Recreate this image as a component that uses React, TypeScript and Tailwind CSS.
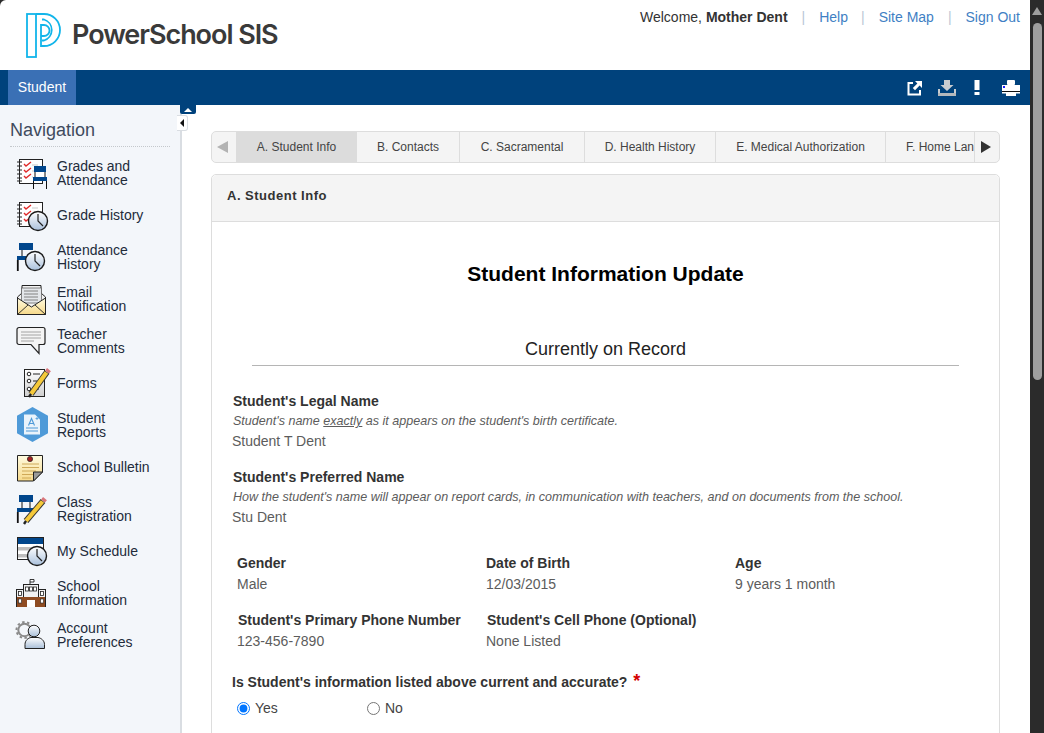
import React from "react";

const Clock = ({ cx, cy, r = 9.5 }: { cx: number; cy: number; r?: number }) => (
  <g>
    <circle cx={cx} cy={cy} r={r} fill="url(#clk)" stroke="#1a1a1a" strokeWidth="1.4" />
    <path d={`M${cx} ${cy - r + 2.5}V${cy}L${cx + 5} ${cy + 5}`} fill="none" stroke="#222" strokeWidth="1.2" />
  </g>
);

const Notebook = ({ y = 3 }: { y?: number }) => (
  <g>
    <rect x="5.5" y={y + 0.5} width="23" height="24" fill="#fff" stroke="#222" />
    {[3, 7, 11, 15, 19, 22].map((d) => (
      <path key={d} d={`M3 ${y + d}h5`} stroke="#222" strokeWidth="1" />
    ))}
    {[3, 9, 15].map((d) => (
      <path key={d} d={`M10 ${y + d + 2}l2 2 5-4`} fill="none" stroke="#e02b2b" strokeWidth="1.4" />
    ))}
    {[6, 12, 18].map((d) => (
      <path key={d} d={`M18 ${y + d}h6`} stroke="#bbb" strokeWidth="0.8" />
    ))}
  </g>
);

const Pencil = ({ x1, y1, x2, y2 }: { x1: number; y1: number; x2: number; y2: number }) => (
  <g>
    <path d={`M${x1} ${y1}L${x2} ${y2}`} stroke="#333" strokeWidth="6" />
    <path d={`M${x1 - 0.5} ${y1 + 0.5}L${x2} ${y2}`} stroke="#f5c93a" strokeWidth="4.2" />
    <path d={`M${x1} ${y1}l2 -2.4`} stroke="#d9757a" strokeWidth="5" />
    <path d={`M${x2} ${y2}l-2 3`} stroke="#222" strokeWidth="2.4" />
  </g>
);

const Svg = ({ children }: { children: React.ReactNode }) => (
  <svg width="34" height="34" viewBox="0 0 34 34" className="overflow-visible shrink-0">
    <defs>
      <linearGradient id="clk" x1="0" y1="0" x2="0" y2="1">
        <stop offset="0" stopColor="#ffffff" />
        <stop offset="1" stopColor="#a9c0dc" />
      </linearGradient>
      <linearGradient id="ppl" x1="0" y1="0" x2="0" y2="1">
        <stop offset="0" stopColor="#ffffff" />
        <stop offset="1" stopColor="#a9bfd8" />
      </linearGradient>
      <linearGradient id="yel" x1="0" y1="0" x2="0" y2="1">
        <stop offset="0" stopColor="#fffbe0" />
        <stop offset="1" stopColor="#f6d98a" />
      </linearGradient>
      <linearGradient id="gry" x1="0" y1="0" x2="0" y2="1">
        <stop offset="0" stopColor="#ffffff" />
        <stop offset="1" stopColor="#cfcfcf" />
      </linearGradient>
    </defs>
    {children}
  </svg>
);

const icons: Record<string, React.ReactNode> = {
  grades: (
    <Svg>
      <Notebook />
      <rect x="20" y="10" width="12" height="6" fill="#00468c" />
      <rect x="19" y="21" width="14" height="4" fill="#00468c" />
      <rect x="19" y="16" width="14" height="5" fill="#fff" />
      <path d="M21 16v5M31 16v5M19.5 25v8M32.5 25v8" stroke="#111" strokeWidth="1" />
    </Svg>
  ),
  history: (
    <Svg>
      <Notebook y={4} />
      <Clock cx={24} cy={23} />
    </Svg>
  ),
  attendance: (
    <Svg>
      <rect x="5" y="3" width="14" height="7" fill="#00468c" />
      <rect x="3" y="16" width="10" height="4" fill="#00468c" />
      <path d="M3.8 20v11" stroke="#111" strokeWidth="1.8" />
      <path d="M8 10v6" stroke="#111" strokeWidth="1" />
      <Clock cx={21} cy={21} />
    </Svg>
  ),
  email: (
    <Svg>
      <path d="M3.5 15L8 11V3.5h19V11l4.5 4V32.5h-28z" fill="#f2f2f2" stroke="#222" />
      <rect x="7.5" y="6" width="20" height="15" fill="#e3e6ea" stroke="#555" strokeWidth="0.7" />
      <path d="M10 9h14M10 12h14M10 15h14M10 18h14" stroke="#777" strokeWidth="0.9" />
      <path d="M3.5 16L17.5 25 31.5 16V32.5h-28z" fill="url(#yel)" stroke="#222" />
      <path d="M3.5 32.5L14 23M31.5 32.5L21 23" stroke="#222" strokeWidth="0.9" />
    </Svg>
  ),
  comment: (
    <Svg>
      <path d="M5 3.5h24a2 2 0 0 1 2 2v13a2 2 0 0 1-2 2h-4v9l-8-9H5a2 2 0 0 1-2-2v-13a2 2 0 0 1 2-2z" fill="#f4f4f4" stroke="#222" strokeWidth="1.2" />
      <path d="M7 8h20M7 11h20M7 14h20M7 17h13" stroke="#9a9a9a" strokeWidth="0.9" />
    </Svg>
  ),
  forms: (
    <Svg>
      <rect x="10.5" y="3.5" width="20" height="27" fill="url(#gry)" stroke="#222" />
      <circle cx="15" cy="8" r="1.8" fill="#fff" stroke="#222" />
      <circle cx="15" cy="15" r="1.8" fill="#fff" stroke="#222" />
      <circle cx="15" cy="23" r="1.8" fill="#fff" stroke="#222" />
      <path d="M19 8h7M19 15h4M19 23h6" stroke="#222" strokeWidth="1" />
      <Pencil x1={33} y1={6} x2={17} y2={28} />
    </Svg>
  ),
  reports: (
    <Svg>
      <path d="M18.5 -1L34 7.7V25.3L18.5 34 3 25.3V7.7z" fill="#4e9ad8" />
      <path d="M10 6.5h11l5 5V26.5H10z" fill="#e9f3fb" />
      <path d="M14.5 17.5l3-7 3 7M15.5 15.5h4" fill="none" stroke="#4e9ad8" strokeWidth="1.1" />
      <path d="M23 9v3M21.5 10.5h3" stroke="#4e9ad8" strokeWidth="0.8" />
      <path d="M12 20h12M12 23h12" stroke="#4e9ad8" strokeWidth="1.1" />
    </Svg>
  ),
  bulletin: (
    <Svg>
      <path d="M3.5 5.5h25V22l-9 9H3.5z" fill="url(#yel)" stroke="#222" />
      <path d="M8 14h17M8 17.5h17M8 21h14M8 24.5h11M8 28h9" stroke="#c9a24e" strokeWidth="0.9" />
      <path d="M19.5 31V22h9z" fill="#9a9a9a" stroke="#222" />
      <circle cx="16" cy="9" r="2.6" fill="#a52020" stroke="#222" strokeWidth="0.7" />
    </Svg>
  ),
  classreg: (
    <Svg>
      <rect x="5" y="3" width="14" height="7" fill="#00468c" />
      <rect x="3" y="16" width="16" height="4" fill="#00468c" />
      <path d="M8 10v6M16 10v6" stroke="#111" strokeWidth="1" />
      <path d="M3.8 20v11" stroke="#111" strokeWidth="1.8" />
      <Pencil x1={29} y1={9} x2={12} y2={29} />
    </Svg>
  ),
  schedule: (
    <Svg>
      <rect x="3.5" y="3.5" width="26" height="22" fill="#fff" stroke="#222" />
      <rect x="4" y="4" width="25" height="6" fill="#00468c" />
      <rect x="4" y="13" width="25" height="3.5" fill="#bdbdbd" />
      <rect x="4" y="20" width="25" height="3.5" fill="#bdbdbd" />
      <Clock cx={23} cy={22} />
    </Svg>
  ),
  school: (
    <Svg>
      <path d="M16 8V3.5h4V6h-4" fill="#fff" stroke="#222" strokeWidth="0.9" />
      <rect x="9.5" y="8.5" width="15" height="22" fill="#f1f1f1" stroke="#222" />
      <rect x="2.5" y="13.5" width="7" height="17" fill="#f1f1f1" stroke="#222" />
      <rect x="24.5" y="13.5" width="7" height="17" fill="#f1f1f1" stroke="#222" />
      <rect x="3" y="21" width="28" height="10" fill="#8f4c22" />
      <rect x="13" y="24" width="8" height="7" fill="#fff" />
      <rect x="4.5" y="23" width="3" height="4" fill="#fff" stroke="#222" strokeWidth="0.6" />
      <rect x="26.5" y="23" width="3" height="4" fill="#fff" stroke="#222" strokeWidth="0.6" />
      {[11.5, 15.5, 19.5].map((x) => (
        <rect key={x} x={x} y="11" width="3" height="4" fill="#fff" stroke="#222" strokeWidth="0.8" />
      ))}
      <rect x="4.5" y="15.5" width="3" height="4" fill="#fff" stroke="#222" strokeWidth="0.8" />
      <rect x="26.5" y="15.5" width="3" height="4" fill="#fff" stroke="#222" strokeWidth="0.8" />
    </Svg>
  ),
  account: (
    <Svg>
      <circle cx="10.5" cy="12" r="6.2" fill="none" stroke="#8a8a8a" strokeWidth="2" />
      <circle cx="10.5" cy="12" r="8" fill="none" stroke="#8a8a8a" strokeWidth="2" strokeDasharray="2.5 2.5" />
      <path d="M9.5 30.5v-4c0-4 3-6.5 6-7h7c3 .5 6.5 3 6.5 7v4z" transform="translate(1.5 0)" fill="url(#ppl)" stroke="#222" />
      <circle cx="20" cy="13" r="5.8" fill="url(#ppl)" stroke="#222" />
    </Svg>
  ),
};

const navItems: [string, string[]][] = [
  ["grades", ["Grades and", "Attendance"]],
  ["history", ["Grade History"]],
  ["attendance", ["Attendance", "History"]],
  ["email", ["Email", "Notification"]],
  ["comment", ["Teacher", "Comments"]],
  ["forms", ["Forms"]],
  ["reports", ["Student", "Reports"]],
  ["bulletin", ["School Bulletin"]],
  ["classreg", ["Class", "Registration"]],
  ["schedule", ["My Schedule"]],
  ["school", ["School", "Information"]],
  ["account", ["Account", "Preferences"]],
];

const tabs: [string, string][] = [
  ["A. Student Info", "w-[121px] bg-[#dcdcdc]"],
  ["B. Contacts", "w-[103px] border-r border-[#dddddd]"],
  ["C. Sacramental", "w-[125px] border-r border-[#dddddd]"],
  ["D. Health History", "w-[131px] border-r border-[#dddddd]"],
  ["E. Medical Authorization", "w-[170px] border-r border-[#dddddd]"],
];

const Sep = () => <span className="text-[#b9c6d6] mx-[14px]">|</span>;

const Field = ({ label, value, w, shift }: { label: string; value: string; w: string; shift?: boolean }) => (
  <div className={w}>
    <div className="font-bold text-[#333] text-[14px] leading-[16px]">{label}</div>
    <div className={`text-[#5c5c5c] text-[14px] leading-[16px] mt-[5px] ${shift ? "-ml-px" : ""}`}>{value}</div>
  </div>
);

export default function App() {
  return (
    <div
      className="relative w-[1044px] h-[733px] overflow-hidden flex bg-[#2b2b2b]"
      style={{ fontFamily: '"Liberation Sans", Arial, sans-serif' }}
    >
      <div className="w-[1030px] h-[733px] flex flex-col bg-white rounded-tl-[6px] overflow-hidden">
        <header className="h-[70px] shrink-0 flex justify-between">
          <div className="flex items-start pl-[26px] pt-[13px]">
            <svg width="36" height="46" viewBox="0 0 36 46" className="shrink-0">
              <g fill="none" stroke="#12b5ea" strokeWidth="1.8">
                <rect x="1" y="1" width="9" height="43" />
                <path d="M10 1h8a16 16 0 0 1 0 32h-3V12h3a5.5 5.5 0 0 1 0 11h-3" />
                <path d="M16 6.500h2a11 11 0 0 1 0 21h-2" />
              </g>
            </svg>
            <span
              className="ml-[10px] mt-[6px] text-[27px] leading-[32px] font-semibold text-[#3a3a3a] tracking-[-1.05px] whitespace-nowrap"
              style={{ fontFamily: 'Inter, "Liberation Sans", sans-serif' }}
            >
              PowerSchool SIS
            </span>
          </div>
          <div className="pr-[10px] pt-[9px] text-[14px] leading-[16px] whitespace-nowrap">
            <span className="text-[#333]">
              Welcome, <b>Mother Dent</b>
            </span>
            <Sep />
            <span className="text-[#3f7fc4] -mr-px">Help</span>
            <Sep />
            <span className="text-[#3f7fc4]">Site Map</span>
            <Sep />
            <span className="text-[#3f7fc4]">Sign Out</span>
          </div>
        </header>

        <div className="h-[35px] shrink-0 bg-[#00427c] flex justify-between pl-[8px] pr-[10px]">
          <div className="w-[68px] h-full bg-[#3a70b5] text-white text-[14px] flex items-center justify-center">Student</div>
          <div className="flex items-center">
            <svg width="16" height="16" viewBox="0 0 16 16" className="mr-[15px]">
              <path d="M6 3H1.500v11.500H13V10" fill="none" stroke="#fff" strokeWidth="2" />
              <path d="M8 1h7v7l-2.400-2.400L8 10.200 5.800 8l4.600-4.600z" fill="#fff" />
            </svg>
            <svg width="18" height="16" viewBox="0 0 18 16" className="mr-[18px]">
              <path d="M6 0h6v5h3.500L9 11 2.500 5H6z" fill="#c8ccd0" />
              <path d="M1 9v6h16V9" fill="none" stroke="#c8ccd0" strokeWidth="2" />
              <rect x="0" y="13" width="18" height="3" fill="#b4b8bc" />
            </svg>
            <svg width="6" height="15" viewBox="0 0 6 15" className="mr-[22px]">
              <rect x="0.5" y="0" width="5" height="10" fill="#fff" />
              <rect x="0.5" y="12" width="5" height="3" fill="#fff" />
            </svg>
            <svg width="18" height="16" viewBox="0 0 18 16">
              <rect x="5" y="0" width="8" height="5" rx="1" fill="#fff" />
              <rect x="0" y="5" width="18" height="6" fill="#fff" />
              <rect x="1" y="6" width="2" height="2" fill="#1a1aff" />
              <rect x="0" y="11" width="18" height="1" fill="#111" />
              <rect x="0" y="12" width="18" height="1.5" fill="#fff" />
              <rect x="4" y="13" width="10" height="3" fill="#fff" />
            </svg>
          </div>
        </div>

        <div className="flex-1 flex min-h-0">
          <aside className="relative w-[182px] shrink-0 bg-[#f3f6fa] border-r-[2px] border-[#d9dde2]">
            <div className="mx-[10px] h-[42px] border-b border-dotted border-[#c4c8cc] text-[18px] leading-[20px] pt-[15px] text-[#3f4b5e]">
              Navigation
            </div>
            <div className="mt-[5px]">
              {navItems.map(([key, lines]) => (
                <div key={key} className="h-[42px] flex items-center pl-[14px]">
                  {icons[key]}
                  <div className="ml-[9px] text-[14px] leading-[14px] text-[#222b3a] whitespace-nowrap">
                    {lines.map((l) => (
                      <div key={l}>{l}</div>
                    ))}
                  </div>
                </div>
              ))}
            </div>
            <div className="absolute left-[180px] top-0 w-[16px] h-[9px] bg-[#00427c] rounded-b-[2px] flex items-center justify-center">
              <svg width="8" height="4" viewBox="0 0 8 4">
                <path d="M4 0l4 4H0z" fill="#fff" />
              </svg>
            </div>
            <div className="absolute left-[177px] top-[10px] w-[11px] h-[16px] bg-white border border-[#d9dde2] border-l-0 rounded-r-[3px] flex items-center justify-center">
              <svg width="4" height="8" viewBox="0 0 4 8">
                <path d="M4 0v8L0 4z" fill="#111" />
              </svg>
            </div>
          </aside>

          <main className="flex-1 min-w-0 pl-[29px] pr-[30px] pt-[26px] overflow-hidden">
            <div className="h-[32px] flex border border-[#dddddd] rounded-[5px] bg-[#f4f4f4] overflow-hidden text-[12px] text-[#444]">
              <div className="w-[24px] shrink-0 flex items-center justify-center pr-[3px]">
                <svg width="11" height="12" viewBox="0 0 11 12">
                  <path d="M11 0v12L0 6z" fill="#b3b3b3" />
                </svg>
              </div>
              {tabs.map(([label, cls]) => (
                <div key={label} className={`${cls} shrink-0 flex items-center justify-center whitespace-nowrap`}>
                  {label}
                </div>
              ))}
              <div className="flex-1 min-w-0 overflow-hidden flex items-center pl-[20px] whitespace-nowrap">F. Home Lan</div>
              <div className="w-[25px] shrink-0 border-l border-[#dddddd] flex items-center justify-center pr-[2px]">
                <svg width="10" height="12" viewBox="0 0 10 12">
                  <path d="M0 0v12l10-6z" fill="#333" />
                </svg>
              </div>
            </div>

            <section className="mt-[11px] border border-[#dddddd] rounded-t-[5px] h-[700px]">
              <div className="h-[47px] bg-[#f4f4f4] border-b border-[#dddddd] flex items-center pl-[15px] pb-[4px] font-bold text-[13px] text-[#333] tracking-[0.5px] rounded-t-[5px]">
                A. Student Info
              </div>
              <div className="pl-[21px] pr-[21px]">
                <h1 className="mt-[40px] text-center text-[21px] leading-[24px] font-bold text-black">Student Information Update</h1>
                <h2 className="mt-[52px] mx-[19px] h-[28px] border-b border-[#b5b5b5] text-center text-[18px] leading-[22px] text-[#222]">
                  Currently on Record
                </h2>

                <div className="mt-[27px] text-[14px] leading-[16px] font-bold text-[#333]">Student's Legal Name</div>
                <div className="mt-[4px] text-[12.55px] leading-[16px] italic text-[#5c5c5c]">
                  Student's name <u>exactly</u> as it appears on the student's birth certificate.
                </div>
                <div className="mt-[4px] -ml-px text-[14px] leading-[16px] text-[#5c5c5c]">Student T Dent</div>

                <div className="mt-[20px] text-[14px] leading-[16px] font-bold text-[#333]">Student's Preferred Name</div>
                <div className="mt-[4px] text-[12.55px] leading-[16px] italic text-[#5c5c5c]">
                  How the student's name will appear on report cards, in communication with teachers, and on documents from the school.
                </div>
                <div className="mt-[4px] -ml-px text-[14px] leading-[16px] text-[#5c5c5c]">Stu Dent</div>

                <div className="mt-[30px] pl-[4px] flex">
                  <Field w="w-[249px]" label="Gender" value="Male" />
                  <Field w="w-[249px]" label="Date of Birth" value="12/03/2015" />
                  <Field w="w-[200px]" label="Age" value="9 years 1 month" />
                </div>
                <div className="mt-[20px] pl-[5px] flex">
                  <Field w="w-[249px]" label="Student's Primary Phone Number" value="123-456-7890" shift />
                  <Field w="w-[300px]" label="Student's Cell Phone (Optional)" value="None Listed" shift />
                </div>

                <div className="mt-[24px] -ml-px text-[14px] leading-[16px] font-bold text-[#333]">
                  Is Student's information listed above current and accurate? <span className="text-[#d40000] text-[18px] leading-[16px] ml-[2px]">*</span>
                </div>
                <div className="mt-[10px] pl-[4px] flex items-center text-[14px] leading-[16px] text-[#444]">
                  <label className="w-[130px] flex items-center">
                    <input type="radio" name="accurate" defaultChecked className="w-[13px] h-[13px] m-0 mr-[5px]" />
                    Yes
                  </label>
                  <label className="flex items-center">
                    <input type="radio" name="accurate" className="w-[13px] h-[13px] m-0 mr-[5px]" />
                    No
                  </label>
                </div>
              </div>
            </section>
          </main>
        </div>
      </div>

      <div className="w-[14px] shrink-0 h-[733px] flex flex-col items-center">
        <svg width="10" height="8" viewBox="0 0 10 8" className="mt-[7px]">
          <path d="M5 0l5 8H0z" fill="#9f9f9f" />
        </svg>
        <div className="mt-[8px] w-[9px] h-[357px] rounded-b-full rounded-t-full bg-[#9f9f9f]" />
      </div>
    </div>
  );
}
